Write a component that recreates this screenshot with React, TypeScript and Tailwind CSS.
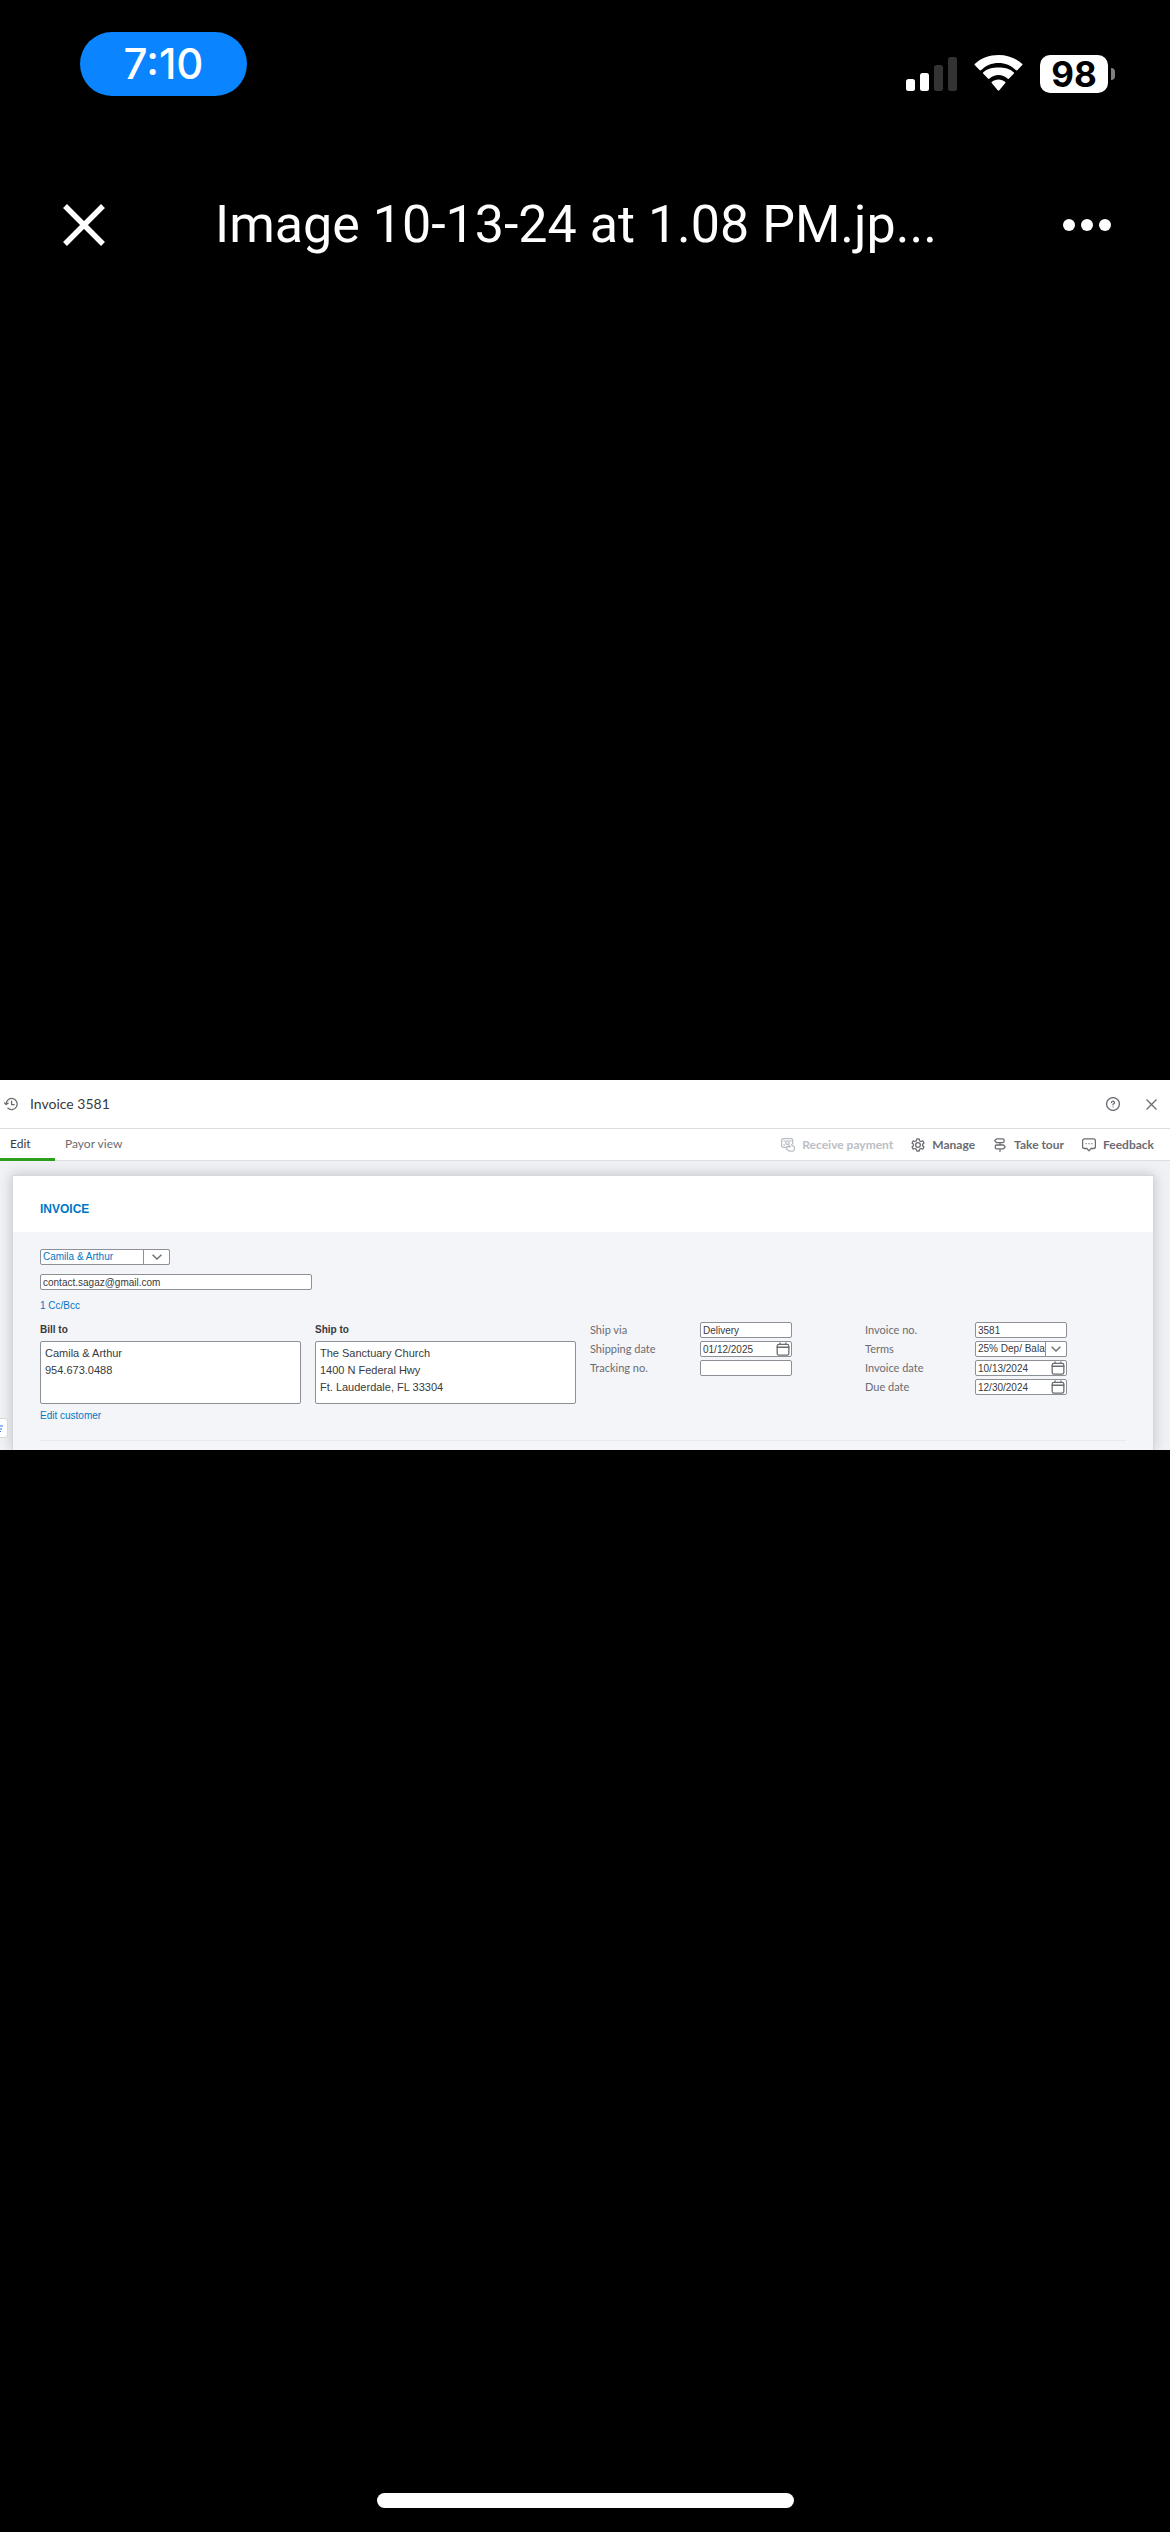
import { useState } from "react";
import type { ReactNode } from "react";

const fieldClass =
  "block h-4 w-full rounded-[2px] border border-[#8d9096] bg-white pl-[2px] text-[10px] leading-[14px] outline-none";
const linkClass = "block w-fit text-[10px] leading-4 text-[#0077c5]";

function StatusBar() {
  return (
    <div className="flex h-32 items-start justify-between pl-20 pr-[55px] pt-8">
      <div className="flex h-16 w-[167px] items-center justify-center rounded-[32px] bg-[#0a84ff] font-[Inter] text-[42px] font-medium leading-none text-white">
        7:10
      </div>
      <div className="mt-[23px] flex items-start">
        <svg className="mt-[2px] h-[34px] w-[51px]" viewBox="0 0 51 34">
          <rect x="0" y="22" width="9" height="12" rx="2.5" fill="#fff" />
          <rect x="14" y="16" width="9" height="18" rx="2.5" fill="#fff" />
          <rect x="28" y="8" width="9" height="26" rx="2.5" fill="#333" />
          <rect x="42" y="0" width="9" height="34" rx="2.5" fill="#333" />
        </svg>
        <svg className="ml-[17px] h-9 w-[49px]" viewBox="0 0 49 36" fill="#fff">
          <path d="M24.5 8c6.6 0 12.700 2.600 17.200 7 .5.500 1.300.500 1.800 0l4.800-5c.3-.3.300-.8 0-1.100C42 3.200 33.600 0 24.500 0S7 3.200.7 8.900c-.3.300-.3.800 0 1.100l4.800 5c.5.500 1.300.500 1.800 0C11.800 10.600 17.900 8 24.500 8z" />
          <path d="M24.500 20c3.400 0 6.500 1.300 8.900 3.500.5.500 1.200.500 1.700 0l4.800-4.900c.3-.3.300-.8 0-1.100-4-3.800-9.500-5-15.400-5s-11.400 1.200-15.400 5c-.3.300-.3.800 0 1.100l4.800 4.900c.5.500 1.200.500 1.700 0 2.400-2.200 5.500-3.500 8.900-3.500z" />
          <path d="M31.300 28.100c.3-.3.300-.8 0-1.100C29.500 25.400 27.100 24.500 24.500 24.500s-5 .9-6.800 2.500c-.3.300-.3.800 0 1.100l6 7.200c.4.500 1.200.500 1.600 0z" />
        </svg>
        <div className="ml-[17px] flex h-[38px] w-[68px] items-center justify-center rounded-[10px] bg-white font-[Inter] text-[35px] font-bold leading-none text-black">
          98
        </div>
        <div className="ml-[3px] mt-[13px] h-3 w-1 rounded-r-full bg-[#7f7f7f]" />
      </div>
    </div>
  );
}

function ViewerHeader() {
  return (
    <header className="flex h-[142px] items-center px-[60px] pr-[59px] pt-[52px] text-white">
      <button aria-label="Close" className="flex w-12 justify-center">
        <svg className="size-[42px]" viewBox="0 0 42 42" stroke="currentColor" strokeWidth="5.500">
          <path d="M2 2l38 38M40 2L2 40" />
        </svg>
      </button>
      <h1 className="ml-[107px] flex-1 whitespace-nowrap font-[Roboto] text-[52px] leading-[64px]">
        Image 10-13-24 at 1.08 PM.jp...
      </h1>
      <button aria-label="More options" className="flex w-12 justify-center">
        <svg className="h-3 w-12" viewBox="0 0 48 12" fill="currentColor">
          <circle cx="6" cy="6" r="6" />
          <circle cx="24" cy="6" r="6" />
          <circle cx="42" cy="6" r="6" />
        </svg>
      </button>
    </header>
  );
}

function Icon({ children, className = "size-[14px]" }: { children: ReactNode; className?: string }) {
  return (
    <svg
      className={className}
      viewBox="0 0 24 24"
      fill="none"
      stroke="currentColor"
      strokeWidth="2.200"
      strokeLinecap="round"
      strokeLinejoin="round"
    >
      {children}
    </svg>
  );
}

const actions = [
  {
    label: "Receive payment",
    disabled: true,
    icon: (
      <>
        <path d="M8 16H4a3 3 0 0 1-3-3V4a3 3 0 0 1 3-3h13a3 3 0 0 1 3 3v6" />
        <path d="M5 5h1M5 12h1M16 5h1" />
        <circle cx="11" cy="8" r="3" />
        <path d="M12 11l4 4h-5c-2.500 0-3 2-1.500 3.500l3 3c.7.700 1.500 1 2.500 1h5a3 3 0 0 0 3-3v-4l-5-4" />
      </>
    ),
  },
  {
    label: "Manage",
    icon: (
      <>
        <circle cx="12" cy="12" r="4" />
        <path d="M10 1.500h4l.8 3.200 2.200 1.300 3.200-1 2 3.500-2.400 2.300v2.400l2.400 2.300-2 3.500-3.200-1-2.200 1.300-.8 3.200h-4l-.8-3.200L7 18l-3.200 1-2-3.500 2.400-2.300v-2.400L1.800 8.500l2-3.500L7 6l2.200-1.300z" />
      </>
    ),
  },
  {
    label: "Take tour",
    icon: (
      <>
        <path d="M6 1.500h11a2 2 0 0 1 2 2V6a2 2 0 0 1-2 2H6L3 4.800z" />
        <path d="M6 12h12l3 3.200-3 3.300H6a2 2 0 0 1-2-2V14a2 2 0 0 1 2-2zM12 8v4M12 18.500V23" />
      </>
    ),
  },
  {
    label: "Feedback",
    icon: (
      <>
        <path d="M4 1.500h16a3 3 0 0 1 3 3V15a3 3 0 0 1-3 3h-4.500L12 22l-3.500-4H4a3 3 0 0 1-3-3V4.500a3 3 0 0 1 3-3z" />
        <path d="M7 9.700h.1M12 9.700h.1M17 9.700h.1" />
      </>
    ),
  },
];

function CalendarIcon() {
  return (
    <Icon className="pointer-events-none absolute right-[2px] top-[1px] size-[14px] text-[#6b6c72]">
      <rect x="2" y="4" width="20" height="18.500" rx="3" />
      <path d="M2 9h20M7 1.500V4M17 1.500V4" />
    </Icon>
  );
}

interface DropdownProps {
  id: string;
  value: string;
  className: string;
  arrowClass: string;
  label?: string;
}

function Dropdown({ id, value, className, arrowClass, label }: DropdownProps) {
  return (
    <div className="relative">
      <select id={id} aria-label={label} className={`${fieldClass} appearance-none ${className}`}>
        <option>{value}</option>
      </select>
      <span
        className={`pointer-events-none absolute inset-y-0 right-0 flex items-center justify-center rounded-r-[2px] border border-[#8d9096] bg-white text-[#6b6c72] ${arrowClass}`}
      >
        <svg className="h-[6px] w-[10px]" viewBox="0 0 10 6" fill="none" stroke="currentColor" strokeWidth="1.400">
          <path d="M.6.7L5 5 9.400.7" />
        </svg>
      </span>
    </div>
  );
}

interface FieldProps {
  id: string;
  label: string;
  value: string;
  kind?: "text" | "date" | "select";
}

const shipping: FieldProps[] = [
  { id: "ship-via", label: "Ship via", value: "Delivery" },
  { id: "ship-date", label: "Shipping date", value: "01/12/2025", kind: "date" },
  { id: "tracking", label: "Tracking no.", value: "" },
];

const details: FieldProps[] = [
  { id: "invoice-no", label: "Invoice no.", value: "3581" },
  { id: "terms", label: "Terms", value: "25% Dep/ Bala", kind: "select" },
  { id: "invoice-date", label: "Invoice date", value: "10/13/2024", kind: "date" },
  { id: "due-date", label: "Due date", value: "12/30/2024", kind: "date" },
];

function Field({ id, label, value, kind = "text" }: FieldProps) {
  return (
    <div className="flex items-center">
      <label htmlFor={id} className="w-[110px] font-[Lato] text-[11px] leading-4 text-[#6b6c72]">
        {label}
      </label>
      <div className="relative w-[92px]">
        {kind === "select" ? (
          <Dropdown id={id} value={value} className="text-[#393a3d]" arrowClass="w-[22px]" />
        ) : (
          <input id={id} defaultValue={value} className={`${fieldClass} text-[#393a3d]`} />
        )}
        {kind === "date" && <CalendarIcon />}
      </div>
    </div>
  );
}

function AddressBox({ id, label, value, children }: { id: string; label: string; value: string; children?: ReactNode }) {
  return (
    <div className="w-[261px]">
      <label htmlFor={id} className="block text-[10px] font-bold leading-4 text-[#393a3d]">
        {label}
      </label>
      <textarea
        id={id}
        defaultValue={value}
        className="mt-[3px] block h-[63px] w-full resize-none rounded-[2px] border border-[#8d9096] bg-white px-1 py-[3px] text-[11px] leading-[17px] text-[#393a3d] outline-none"
      />
      {children}
    </div>
  );
}

function InvoiceForm() {
  return (
    <form className="ml-3 mr-4 mt-[14px] border border-b-0 border-[#d4d7dc] bg-[#f4f5f8] shadow-[0_0_12px_rgba(0,0,0,0.2)]">
      <div className="flex h-14 items-end bg-white px-[27px] pb-[15px]">
        <h3 className="text-[12px] font-bold leading-4 text-[#0077c5]">INVOICE</h3>
      </div>
      <div className="px-[27px] pt-[17px]">
        <div className="w-[130px]">
          <Dropdown
            id="customer"
            label="Customer"
            value="Camila & Arthur"
            className="text-[#0077c5]"
            arrowClass="w-[27px]"
          />
        </div>
        <input
          type="email"
          aria-label="Customer email"
          defaultValue="contact.sagaz@gmail.com"
          className={`${fieldClass} mt-[9px] max-w-[272px] text-[#393a3d]`}
        />
        <a href="#cc" className={`mt-2 ${linkClass}`}>1 Cc/Bcc</a>
        <div className="mt-2 flex items-start">
          <AddressBox id="bill-to" label="Bill to" value={"Camila & Arthur\n954.673.0488"}>
            <a href="#customer" className={`mt-1 ${linkClass}`}>Edit customer</a>
          </AddressBox>
          <div className="ml-[14px]">
            <AddressBox id="ship-to" label="Ship to" value={"The Sanctuary Church\n1400 N Federal Hwy\nFt. Lauderdale, FL 33304"} />
          </div>
          <div className="ml-[14px] flex flex-col gap-[3px]">
            {shipping.map((field) => <Field key={field.id} {...field} />)}
          </div>
          <div className="ml-[73px] flex flex-col gap-[3px]">
            {details.map((field) => <Field key={field.id} {...field} />)}
          </div>
        </div>
        <div className="mt-4 h-[10px] border-t border-[#e9eaee]" />
      </div>
    </form>
  );
}

function InvoicePage() {
  const [tab, setTab] = useState("Edit");

  return (
    <section className="relative w-full overflow-hidden bg-[#f0f1f5] font-['Liberation_Sans',sans-serif]">
      <div className="flex h-[49px] items-center justify-between border-b border-[#dcdde1] bg-white pl-1 pr-[13px] text-[#6b6c72]">
        <div className="flex items-center gap-3">
          <Icon>
            <path d="M3.500 12a9.500 9.500 0 1 1 3 7M1 10l2.500 3L7 10.500M13 7v6h4.500" />
          </Icon>
          <h2 className="font-[Lato] text-[14px] leading-5 text-[#393a3d]">Invoice 3581</h2>
        </div>
        <div className="flex items-center gap-[26px]">
          <button aria-label="Help">
            <Icon>
              <circle cx="12" cy="12" r="11" />
              <path d="M9.500 9.500a2.500 2.500 0 1 1 3.500 2.300c-.7.300-1 .700-1 1.500M12 16.800v.1" />
            </Icon>
          </button>
          <button aria-label="Close invoice">
            <svg className="size-[11px]" viewBox="0 0 11 11" stroke="currentColor" strokeWidth="1.300">
              <path d="M.5.500l10 10M10.500.500l-10 10" />
            </svg>
          </button>
        </div>
      </div>

      <div className="flex h-8 justify-between border-b border-[#dcdde1] bg-white pr-4 font-[Lato] text-[12px] leading-4">
        <div className="flex">
          {["Edit", "Payor view"].map((name) => (
            <button
              key={name}
              onClick={() => setTab(name)}
              className={
                tab === name
                  ? "-mb-px w-[55px] border-b-[3px] border-[#2ca01c] pl-[10px] text-left text-[#393a3d]"
                  : "-mb-px border-b-[3px] border-transparent px-[10px] text-[#6b6c72]"
              }
            >
              {name}
            </button>
          ))}
        </div>
        <div className="flex items-center gap-[18px] font-bold text-[#6b6c72]">
          {actions.map(({ label, icon, disabled }) => (
            <button key={label} disabled={disabled} className="flex items-center gap-[7px] disabled:text-[#babec5]">
              <Icon>{icon}</Icon>
              {label}
            </button>
          ))}
        </div>
      </div>

      <InvoiceForm />

      {/* Edge of the floating side tab */}
      <div className="absolute bottom-3 left-0 flex h-5 w-2 items-center rounded-r-[4px] border border-l-0 border-[#d4d7dc] bg-white">
        <svg className="h-2 w-[3px]" viewBox="0 0 3 8" stroke="#2f6fed" strokeWidth="1.200">
          <path d="M0 2h3M0 5h2M0 7.500h1" />
        </svg>
      </div>
    </section>
  );
}

export default function App() {
  return (
    <div className="flex min-h-screen flex-col bg-black">
      <StatusBar />
      <ViewerHeader />
      <main className="flex flex-1 items-center">
        <InvoicePage />
      </main>
      <footer className="flex h-[272px] items-end justify-center pb-6">
        <div className="h-[15px] w-[417px] rounded-full bg-white" />
      </footer>
    </div>
  );
}
